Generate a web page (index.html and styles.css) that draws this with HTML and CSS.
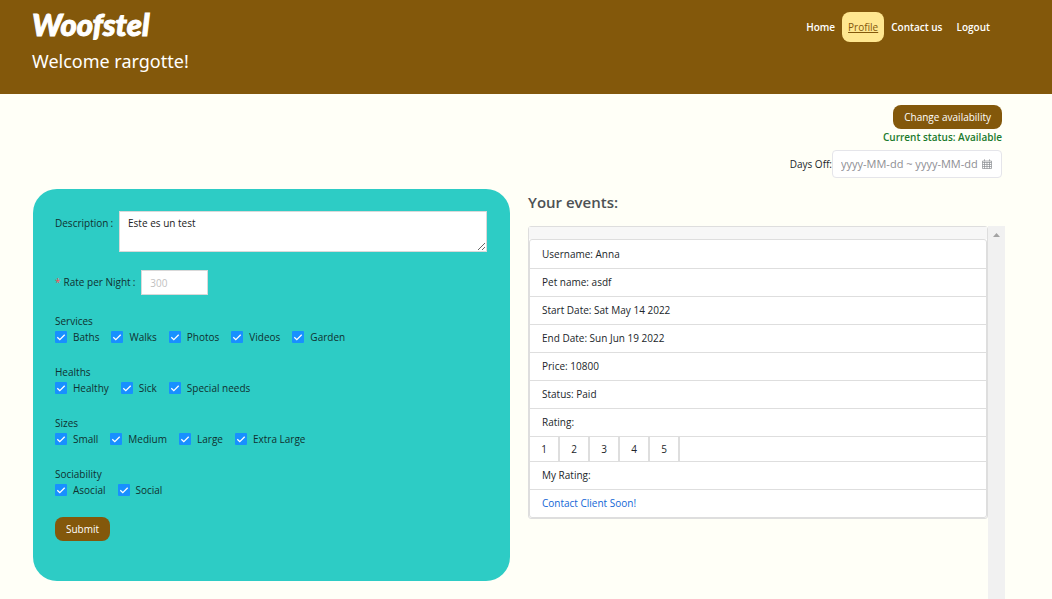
FILE: index.html
```html
<!DOCTYPE html>
<html lang="en">
<head>
<meta charset="utf-8">
<meta name="viewport" content="width=device-width, initial-scale=1">
<title>Woofstel - Profile</title>
<link rel="stylesheet" href="styles.css">
</head>
<body>
<header class="header">
  <div class="brand">
    <h1 class="logo">Woofstel</h1>
    <p class="welcome">Welcome rargotte!</p>
  </div>
  <nav class="nav">
    <a class="nav-link" href="#">Home</a>
    <a class="nav-link active" href="#">Profile</a>
    <a class="nav-link" href="#">Contact us</a>
    <a class="nav-link" href="#">Logout</a>
  </nav>
</header>
<main class="main">
  <section class="availability">
    <button class="btn" type="button">Change availability</button>
    <p class="status">Current status: Available</p>
    <div class="days-off">
      <label for="days">Days Off:</label>
      <div class="date-box">
        <input class="date-input" id="days" type="text" placeholder="yyyy-MM-dd ~ yyyy-MM-dd">
        <svg class="calendar" viewBox="0 0 10 10" aria-hidden="true"><path d="M.5 2h9v7.5h-9zM2.5.3v2M7.5.3v2M.5 3.5h9M.5 5.5h9M.5 7.5h9M2.5 3v6.500M5 3v6.500M7.500 3v6.500" fill="none" stroke="#8a8d91" stroke-width=".7"/></svg>
      </div>
    </div>
  </section>
  <div class="columns">
    <form class="card">
      <div class="field">
        <label for="desc">Description<span class="colon">:</span></label>
        <textarea class="description" id="desc">Este es un test</textarea>
      </div>
      <div class="field rate-field">
        <label for="rate"><span class="required">*</span>Rate per Night<span class="colon">:</span></label>
        <input class="rate" id="rate" type="text" placeholder="300">
      </div>
      <fieldset class="group">
        <legend>Services</legend>
        <div class="options">
          <label class="option"><input type="checkbox" checked>Baths</label>
          <label class="option"><input type="checkbox" checked>Walks</label>
          <label class="option"><input type="checkbox" checked>Photos</label>
          <label class="option"><input type="checkbox" checked>Videos</label>
          <label class="option"><input type="checkbox" checked>Garden</label>
        </div>
      </fieldset>
      <fieldset class="group">
        <legend>Healths</legend>
        <div class="options">
          <label class="option"><input type="checkbox" checked>Healthy</label>
          <label class="option"><input type="checkbox" checked>Sick</label>
          <label class="option"><input type="checkbox" checked>Special needs</label>
        </div>
      </fieldset>
      <fieldset class="group">
        <legend>Sizes</legend>
        <div class="options">
          <label class="option"><input type="checkbox" checked>Small</label>
          <label class="option"><input type="checkbox" checked>Medium</label>
          <label class="option"><input type="checkbox" checked>Large</label>
          <label class="option"><input type="checkbox" checked>Extra Large</label>
        </div>
      </fieldset>
      <fieldset class="group">
        <legend>Sociability</legend>
        <div class="options">
          <label class="option"><input type="checkbox" checked>Asocial</label>
          <label class="option"><input type="checkbox" checked>Social</label>
        </div>
      </fieldset>
      <button class="btn" type="submit">Submit</button>
    </form>
    <section class="events">
      <h2 class="events-title">Your events:</h2>
      <div class="scroll-area">
        <div class="event">
          <div class="event-head"></div>
          <ul class="event-list">
            <li>Username: Anna</li>
            <li>Pet name: asdf</li>
            <li>Start Date: Sat May 14 2022</li>
            <li>End Date: Sun Jun 19 2022</li>
            <li>Price: 10800</li>
            <li>Status: Paid</li>
            <li>Rating:</li>
            <li class="rating">
              <button type="button">1</button><button type="button">2</button><button type="button">3</button><button type="button">4</button><button type="button">5</button>
            </li>
            <li>My Rating:</li>
            <li><a class="contact" href="#">Contact Client Soon!</a></li>
          </ul>
        </div>
        <div class="track"><svg class="arrow" viewBox="0 0 7 4" aria-hidden="true"><path d="M0 4L3.500 0L7 4z" fill="#a3a3a3"/></svg></div>
      </div>
    </section>
  </div>
</main>
</body>
</html>
```
FILE: styles.css
```css
* { box-sizing: border-box; }
body {
  display: flex;
  flex-direction: column;
  min-height: 100vh;
  margin: 0;
  background: #fffff7;
  color: #212529;
  font: 10px/16px "Open Sans", "Noto Sans", sans-serif;
}
h1, h2, p, ul { margin: 0; padding: 0; }
button, input, textarea { font: inherit; }
.header {
  display: flex;
  justify-content: space-between;
  align-items: flex-start;
  height: 94px;
  padding: 4px 54px 0 32px;
  background: #83580b;
  color: #fff;
}
.logo {
  font: italic 900 31px/40px Lato, sans-serif;
  -webkit-text-stroke: 1px #fff;
}
.welcome { font: 18px/28px "Noto Sans", "Open Sans", sans-serif; margin-top: 3px; }
.nav { display: flex; padding-top: 8px; }
.nav-link {
  padding: 7px;
  border-radius: 8px;
  color: #fff;
  font-weight: 600;
  text-decoration: none;
}
.nav-link:last-child { padding-right: 8px; }
.nav-link.active {
  padding: 7px 6px;
  background: #ffe790;
  color: #83580b;
  font-size: 10px;
  font-weight: 400;
  text-decoration: underline;
}
.main {
  flex: 1;
  display: flex;
  flex-direction: column;
  padding: 11px 47px 0 33px;
}
.availability {
  display: flex;
  flex-direction: column;
  align-items: flex-end;
  padding-right: 3px;
}
.btn {
  height: 24px;
  padding: 0 11px;
  border: 0;
  border-radius: 8px;
  background: #83580b;
  color: #fff;
}
.status { color: #1a7a2c; font-weight: 600; }
.days-off { display: flex; align-items: center; margin-top: 5px; }
.date-box {
  display: flex;
  align-items: center;
  width: 170px;
  height: 28px;
  padding: 0 9px 0 8px;
  border: 1px solid #e5e5ea;
  border-radius: 4px;
  background: #fff;
}
.date-input {
  flex: 1;
  min-width: 0;
  padding: 0;
  border: 0;
  background: none;
  font-size: 11px;
}
.date-input::placeholder { color: #8e8e93; opacity: 1; }
.calendar { width: 10px; height: 10px; }
.columns {
  flex: 1;
  display: grid;
  grid-template-columns: 1fr 1fr;
  gap: 18px;
  margin-top: 11px;
}
.card {
  align-self: start;
  padding: 22px 22px 40px;
  border-radius: 24px;
  background: #2dccc5;
  color: #10302f;
}
.field { display: flex; gap: 6px; }
.field > label { padding-top: 4px; }
.colon { margin-left: 2px; }
.description {
  flex: 1;
  width: 270px;
  height: 41px;
  margin-right: 1px;
  padding: 3px 8px;
  border: 1px solid #d9d9d9;
  background: #fff;
  color: #212121;
}
.rate-field { margin-top: 18px; }
.required { color: #ff4d4f; margin-right: 3px; }
.rate {
  width: 67px;
  height: 25px;
  padding: 0 8px;
  border: 1px solid #d9d9d9;
  background: #fff;
}
.rate::placeholder { color: #bfbfbf; opacity: 1; }
.group { margin: 0 0 19px; padding: 0; border: 0; }
.rate-field + .group { margin-top: 18px; }
.group legend { padding: 0; }
.options { display: flex; gap: 12px; }
.option { display: flex; align-items: center; gap: 6px; }
.option input {
  appearance: none;
  width: 12px;
  height: 12px;
  margin: 0;
  border-radius: 1px;
  background: #1890ff url("data:image/svg+xml,%3Csvg xmlns='http://www.w3.org/2000/svg' viewBox='0 0 12 12'%3E%3Cpath d='M2.300 6.200l2.500 2.400L9.700 3.700' fill='none' stroke='white' stroke-width='1.300'/%3E%3C/svg%3E");
}
.events { display: flex; flex-direction: column; }
.events-title {
  margin-bottom: 10px;
  color: #4d5154;
  font: 600 15px/27px "Open Sans", sans-serif;
}
.scroll-area { flex: 1; display: flex; }
.event {
  flex: 1;
  align-self: flex-start;
  border: 1px solid #dedede;
  border-radius: 3px;
  background: #fff;
}
.event-head { height: 12px; background: #f7f7f7; }
.event-list {
  list-style: none;
  border: 1px solid #dedede;
  border-radius: 3px;
}
.event-list li {
  padding: 5px 12px 6px;
  border-bottom: 1px solid #dedede;
}
.event-list li:first-child { padding-top: 6px; }
.event-list li:last-child { border-bottom: 0; }
.event-list .rating { display: flex; padding: 0; }
.rating button {
  width: 30px;
  height: 24px;
  padding: 0;
  border: 1px solid #dedede;
  border-width: 0 2px 0 0;
  background: #fff;
  color: #212529;
}
.contact { color: #1266d6; text-decoration: none; }
.track { width: 17px; padding-top: 7px; background: #f1f1f1; }
.arrow { display: block; width: 7px; height: 4px; margin: 0 auto; }
```
